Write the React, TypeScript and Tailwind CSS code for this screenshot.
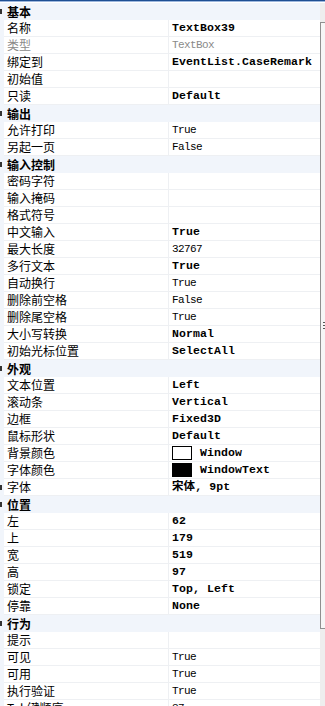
import React from 'react';

type Row =
  | { kind: 'cat'; name: string }
  | { kind: 'prop'; name: string; value?: string; bold?: boolean; dim?: boolean; swatch?: 'white' | 'black'; expand?: boolean };

const rows: Row[] = [
  { kind: 'cat', name: '基本' },
  { kind: 'prop', name: '名称', value: 'TextBox39', bold: true },
  { kind: 'prop', name: '类型', value: 'TextBox', dim: true },
  { kind: 'prop', name: '绑定到', value: 'EventList.CaseRemark', bold: true },
  { kind: 'prop', name: '初始值' },
  { kind: 'prop', name: '只读', value: 'Default', bold: true },
  { kind: 'cat', name: '输出' },
  { kind: 'prop', name: '允许打印', value: 'True' },
  { kind: 'prop', name: '另起一页', value: 'False' },
  { kind: 'cat', name: '输入控制' },
  { kind: 'prop', name: '密码字符' },
  { kind: 'prop', name: '输入掩码' },
  { kind: 'prop', name: '格式符号' },
  { kind: 'prop', name: '中文输入', value: 'True', bold: true },
  { kind: 'prop', name: '最大长度', value: '32767' },
  { kind: 'prop', name: '多行文本', value: 'True', bold: true },
  { kind: 'prop', name: '自动换行', value: 'True' },
  { kind: 'prop', name: '删除前空格', value: 'False' },
  { kind: 'prop', name: '删除尾空格', value: 'True' },
  { kind: 'prop', name: '大小写转换', value: 'Normal', bold: true },
  { kind: 'prop', name: '初始光标位置', value: 'SelectAll', bold: true },
  { kind: 'cat', name: '外观' },
  { kind: 'prop', name: '文本位置', value: 'Left', bold: true },
  { kind: 'prop', name: '滚动条', value: 'Vertical', bold: true },
  { kind: 'prop', name: '边框', value: 'Fixed3D', bold: true },
  { kind: 'prop', name: '鼠标形状', value: 'Default', bold: true },
  { kind: 'prop', name: '背景颜色', value: 'Window', bold: true, swatch: 'white' },
  { kind: 'prop', name: '字体颜色', value: 'WindowText', bold: true, swatch: 'black' },
  { kind: 'prop', name: '字体', value: '宋体, 9pt', bold: true, expand: true },
  { kind: 'cat', name: '位置' },
  { kind: 'prop', name: '左', value: '62', bold: true },
  { kind: 'prop', name: '上', value: '179', bold: true },
  { kind: 'prop', name: '宽', value: '519', bold: true },
  { kind: 'prop', name: '高', value: '97', bold: true },
  { kind: 'prop', name: '锁定', value: 'Top, Left', bold: true },
  { kind: 'prop', name: '停靠', value: 'None', bold: true },
  { kind: 'cat', name: '行为' },
  { kind: 'prop', name: '提示' },
  { kind: 'prop', name: '可见', value: 'True' },
  { kind: 'prop', name: '可用', value: 'True' },
  { kind: 'prop', name: '执行验证', value: 'True' },
  { kind: 'prop', name: 'Tab键顺序', value: '37' },
];

const cjk = "font-['SimSun','Noto_Sans_CJK_SC',sans-serif]";
const mono = "font-['Liberation_Mono','Noto_Sans_CJK_SC',monospace]";

const Marker = () => <span className="absolute left-0 top-[6px] w-[2px] h-[5px] bg-[#333]" />;

const App: React.FC = () => {
  return (
    <div className="w-[325px] h-[706px] overflow-hidden bg-white flex flex-col">
      {/* window edge */}
      <div className="h-[1px] bg-[#1f4f93] shrink-0" />
      <div className="h-[1px] bg-[#9db7dd] shrink-0" />
      <div className="h-[1px] bg-white shrink-0" />

      <div className="flex flex-1 min-h-0">
        {/* grid */}
        <div className="w-[320px] flex flex-col">
          {rows.map((r, i) =>
            r.kind === 'cat' ? (
              <div key={i} className="relative h-[17px] shrink-0 bg-[#f1f5fb] flex items-center pl-[7px]">
                <Marker />
                <span className={`${cjk} text-[12px] leading-none font-bold text-black`}>{r.name}</span>
              </div>
            ) : (
              <div key={i} className="relative h-[17px] shrink-0 flex bg-[#f1f5fb]">
                {r.expand && <Marker />}
                <div className="ml-[4px] flex-1 flex bg-white border-b border-[#eef0f3]">
                  <div className="w-[165px] flex items-center pl-[3px] border-r border-[#eef0f3]">
                    <span className={`${cjk} text-[12px] leading-none ${r.dim ? 'text-[#8a8a8a]' : 'text-black'}`}>{r.name}</span>
                  </div>
                  <div className="flex-1 flex items-center pl-[3px] gap-[8px]">
                    {r.swatch && (
                      <span
                        className={`w-[20px] h-[14px] border border-black ${r.swatch === 'black' ? 'bg-black' : 'bg-white'}`}
                      />
                    )}
                    {r.value && (
                      <span
                        className={`${mono} leading-none whitespace-pre ${
                          r.bold ? 'text-[11.5px] font-bold tracking-[0.1px]' : 'text-[11px] tracking-[-0.6px]'
                        } ${r.dim ? 'text-[#8a8a8a]' : 'text-black'}`}
                      >
                        {r.value}
                      </span>
                    )}
                  </div>
                </div>
              </div>
            )
          )}
        </div>

        {/* clipped vertical scrollbar */}
        <div className="w-[5px] bg-[#eeeeee] flex flex-col">
          <div className="h-[19px] shrink-0" />
          <div className="h-[607px] shrink-0 border-l border-t border-b border-[#8f8f8f] bg-[#f6f6f6] flex flex-col items-end justify-center gap-[2px]">
            <span className="w-[2px] h-[1px] bg-[#555]" />
            <span className="w-[2px] h-[1px] bg-[#555]" />
            <span className="w-[2px] h-[1px] bg-[#555]" />
          </div>
        </div>
      </div>
    </div>
  );
};

export default App;
